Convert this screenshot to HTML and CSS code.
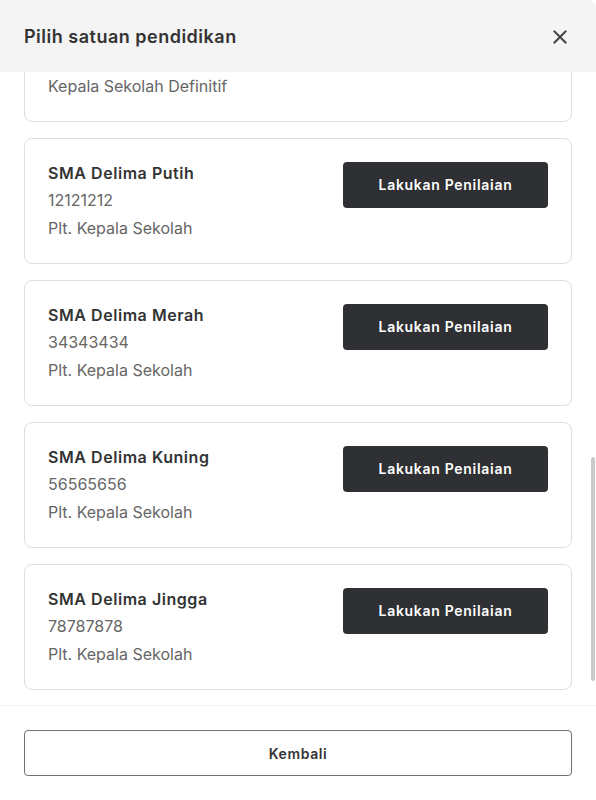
FILE: index.html
```html
<!DOCTYPE html>
<html lang="id">
<head>
<meta charset="utf-8">
<title>Pilih satuan pendidikan</title>
<link rel="stylesheet" href="styles.css">
</head>
<body>
<div class="modal">
  <header class="modal-header">
    <h1 class="modal-title">Pilih satuan pendidikan</h1>
    <button class="close-btn" aria-label="Tutup">
      <svg width="14" height="14" viewBox="0 0 14 14"><path d="M1.5 1.5 L12.5 12.5 M12.5 1.5 L1.5 12.5" stroke="#444" stroke-width="2" stroke-linecap="square" fill="none"/></svg>
    </button>
  </header>
  <div class="body-wrap">
    <div class="modal-body" id="list">
      <div class="card">
        <div class="info"><div class="name">SMA Delima Hijau</div><div class="meta">10101010</div><div class="meta">Kepala Sekolah Definitif</div></div>
        <button class="btn-primary">Lakukan Penilaian</button>
      </div>
      <div class="card">
        <div class="info"><div class="name">SMA Delima Biru</div><div class="meta">20202020</div><div class="meta">Kepala Sekolah Definitif</div></div>
        <button class="btn-primary">Lakukan Penilaian</button>
      </div>
      <div class="card">
        <div class="info"><div class="name">SMA Delima Ungu</div><div class="meta">30303030</div><div class="meta">Kepala Sekolah Definitif</div></div>
        <button class="btn-primary">Lakukan Penilaian</button>
      </div>
      <div class="card" id="first-visible">
        <div class="info"><div class="name">SMA Delima Putih</div><div class="meta">12121212</div><div class="meta">Plt. Kepala Sekolah</div></div>
        <button class="btn-primary">Lakukan Penilaian</button>
      </div>
      <div class="card">
        <div class="info"><div class="name">SMA Delima Merah</div><div class="meta">34343434</div><div class="meta">Plt. Kepala Sekolah</div></div>
        <button class="btn-primary">Lakukan Penilaian</button>
      </div>
      <div class="card">
        <div class="info"><div class="name">SMA Delima Kuning</div><div class="meta">56565656</div><div class="meta">Plt. Kepala Sekolah</div></div>
        <button class="btn-primary">Lakukan Penilaian</button>
      </div>
      <div class="card">
        <div class="info"><div class="name">SMA Delima Jingga</div><div class="meta">78787878</div><div class="meta">Plt. Kepala Sekolah</div></div>
        <button class="btn-primary">Lakukan Penilaian</button>
      </div>
    </div>
    <div class="scroll-thumb"></div>
  </div>
  <footer class="modal-footer">
    <button class="btn-outline">Kembali</button>
  </footer>
</div>
<script src="script.js"></script>
</body>
</html>
```
FILE: styles.css
```css
* { box-sizing: border-box; }
html, body { margin: 0; padding: 0; background: #ffffff; }
body { font-family: Inter, "Noto Sans", sans-serif; color: #333333; }

.modal {
  height: 800px;
  display: flex;
  flex-direction: column;
  background: #ffffff;
  border-radius: 0 8px 0 0;
  overflow: hidden;
}

.modal-header {
  flex: none;
  height: 72px;
  background: #f4f4f4;
  padding: 2px 24px 0;
  display: flex;
  align-items: center;
  justify-content: space-between;
}
.modal-title {
  margin: 0;
  font-size: 18px;
  font-weight: 600;
  letter-spacing: 0.5px;
  color: #333333;
  line-height: 24px;
}
.close-btn {
  border: 0;
  background: transparent;
  padding: 0;
  width: 24px;
  height: 24px;
  display: flex;
  align-items: center;
  justify-content: center;
  cursor: pointer;
}

.body-wrap {
  flex: 1;
  position: relative;
  min-height: 0;
}
.modal-body {
  position: relative;
  height: 100%;
  overflow-y: auto;
  scrollbar-width: none;
  padding: 24px 24px 24px;
  display: flex;
  flex-direction: column;
  gap: 16px;
}
.modal-body::-webkit-scrollbar { display: none; }

.scroll-thumb {
  position: absolute;
  right: 1px;
  top: 385px;
  width: 4px;
  height: 224px;
  background: #c9c9cc;
  border-radius: 2px;
}

.card {
  flex: none;
  border: 1px solid #dedede;
  border-radius: 8px;
  padding: 23px;
  display: flex;
  justify-content: space-between;
  align-items: flex-start;
  min-height: 126px;
}
.info {
  display: flex;
  flex-direction: column;
  gap: 8px;
  padding-top: 1px;
}
.name {
  font-size: 16px;
  font-weight: 600;
  letter-spacing: 0.55px;
  line-height: 20px;
  color: #333333;
  margin-bottom: -1px;
}
.meta {
  font-size: 16px;
  font-weight: 400;
  line-height: 20px;
  color: #666666;
}
.btn-primary {
  width: 205px;
  height: 46px;
  border: 0;
  border-radius: 4px;
  background: #2f3033;
  color: #ffffff;
  font-family: Inter, "Noto Sans", sans-serif;
  font-size: 14px;
  font-weight: 600;
  letter-spacing: 0.7px;
  padding: 0 0 2px;
  cursor: pointer;
}

.modal-footer {
  flex: none;
  border-top: 1px solid #f3f3f3;
  padding: 24px;
  background: #ffffff;
}
.btn-outline {
  width: 100%;
  height: 46px;
  border: 1px solid #707070;
  border-radius: 4px;
  background: #ffffff;
  color: #333333;
  font-family: Inter, "Noto Sans", sans-serif;
  font-size: 14px;
  font-weight: 600;
  letter-spacing: 0.6px;
  cursor: pointer;
}
```
FILE: script.js
```js
(function () {
  var list = document.getElementById('list');
  var target = document.getElementById('first-visible');
  list.scrollTop = target.offsetTop - 66;
})();
```
